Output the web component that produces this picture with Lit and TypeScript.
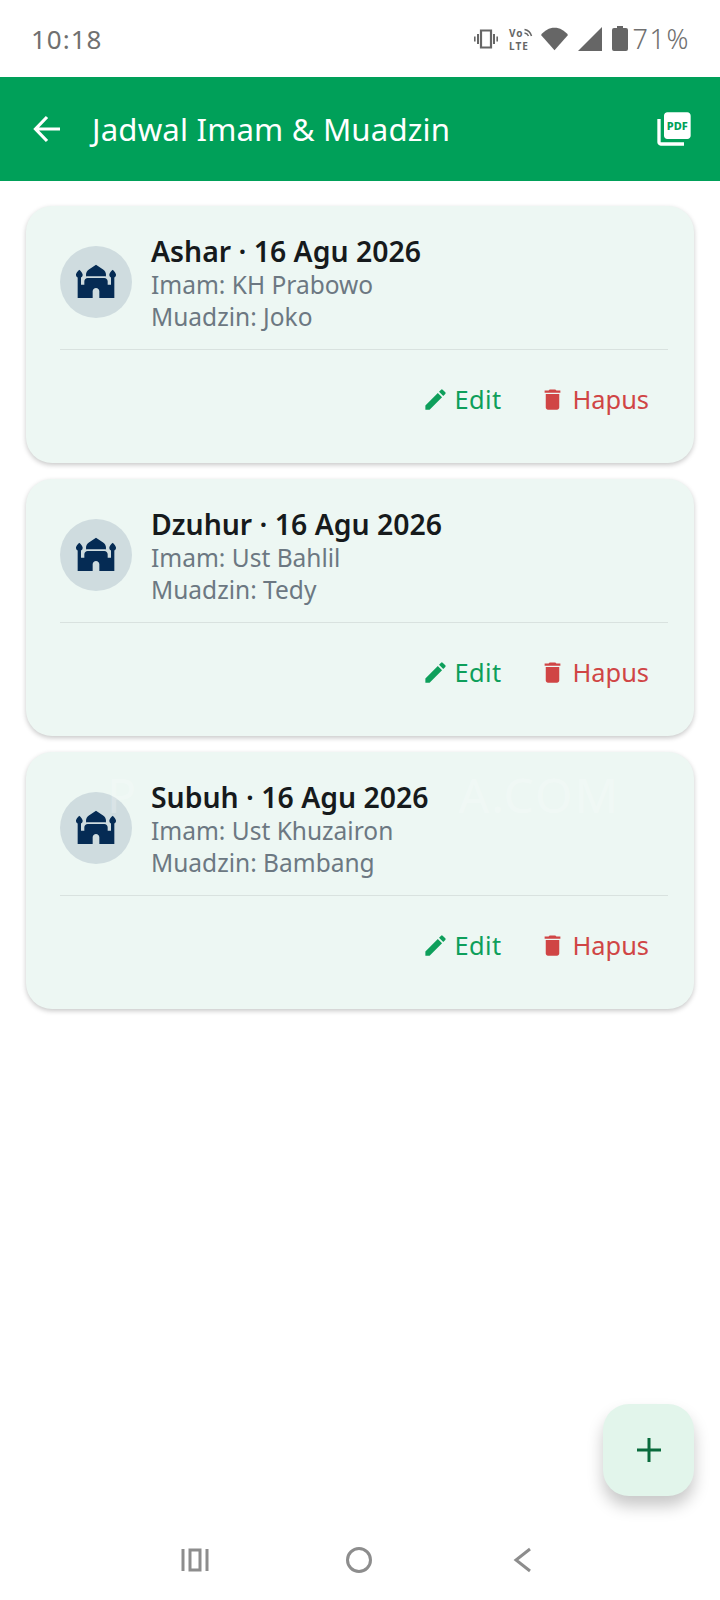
import { LitElement, html, css, svg } from "lit";
import { customElement } from "lit/decorators.js";

const mosque = svg`<path d="M7 8h10c.29 0 .57.06.84.13.09-.33.16-.67.16-1.04 0-1.31-.65-2.53-1.74-3.25L12 1 7.74 3.84C6.65 4.56 6 5.78 6 7.09c0 .37.07.71.16 1.04C6.43 8.06 6.71 8 7 8z"/><path d="M24 7c0-1.1-2-3-2-3s-2 1.9-2 3c0 .74.4 1.38 1 1.72V13h-2v-2c0-1.1-.9-2-2-2H7c-1.1 0-2 .9-2 2v2H3V8.72C3.6 8.38 4 7.74 4 7c0-1.1-2-3-2-3S0 5.9 0 7c0 .74.4 1.38 1 1.72V21h9v-4c0-1.1.9-2 2-2s2 .9 2 2v4h9V8.72c.6-.34 1-.98 1-1.72z"/>`;

const rows = [
  { t: "Ashar · 16 Agu 2026", i: "Imam: KH Prabowo", m: "Muadzin: Joko" },
  { t: "Dzuhur · 16 Agu 2026", i: "Imam: Ust Bahlil", m: "Muadzin: Tedy" },
  { t: "Subuh · 16 Agu 2026", i: "Imam: Ust Khuzairon", m: "Muadzin: Bambang" },
];

@customElement("app-root")
export class AppRoot extends LitElement {
  static styles = css`
    :host { display: block; width: 720px; height: 1600px; background: #fff; font-family: "Noto Sans", sans-serif; position: relative; overflow: hidden; }
    .page { display: flex; flex-direction: column; height: 1600px; }
    .status { height: 77px; flex: none; display: flex; align-items: center; justify-content: space-between; padding: 0 30px 0 31px; color: #707070; font-size: 26px; letter-spacing: 1px; box-sizing: border-box; }
    .status-icons { display: flex; align-items: center; gap: 10px; }
    .status svg { display: block; fill: #666; }
    .status svg.lte { margin-right: -3px; }
    .batt { display: flex; align-items: center; gap: 4px; font-size: 27px; font-weight: 300; letter-spacing: 1.6px; white-space: nowrap; }
    .bar { height: 104px; flex: none; background: #00a059; color: #fff; display: flex; align-items: center; padding: 0 26px 0 33px; box-sizing: border-box; }
    .bar .title { flex: 1; margin-left: 31px; font-size: 31.2px; letter-spacing: 0.15px; }
    .bar svg { display: block; fill: #fff; }
    .back { fill: none !important; stroke: #fff; stroke-width: 3.2; }
    .list { flex: 1; display: flex; flex-direction: column; gap: 16px; padding: 25px 26px 0; position: relative; }
    .card { background: #edf7f3; border-radius: 26px; height: 257px; box-sizing: border-box; padding: 26px 26px 0 34px; box-shadow: 0 2px 5px rgba(0,0,0,.22); display: flex; flex-direction: column; }
    .top { display: flex; align-items: center; gap: 19px; height: 117.5px; border-bottom: 1px solid #d9e2df; box-sizing: border-box; padding-bottom: 17.5px; flex: none; }
    .avatar { width: 72px; height: 72px; border-radius: 50%; background: #cfdcdf; display: flex; align-items: center; justify-content: center; flex: none; padding-bottom: 2px; box-sizing: border-box; }
    .avatar svg { width: 40px; height: 35px; fill: #052b54; display: block; }
    .text { display: flex; flex-direction: column; padding-top: 3px; }
    .name { font-size: 28.4px; font-weight: 600; color: #161a1c; line-height: 36px; white-space: nowrap; }
    .sub { font-size: 24.5px; color: #6c7882; line-height: 32px; white-space: nowrap; }
    .actions { display: flex; justify-content: flex-end; align-items: center; flex: 1; padding-bottom: 14px; padding-right: 19px; gap: 38px; font-size: 25.4px; }
    .act { display: flex; align-items: center; gap: 6px; }
    .act svg { width: 27px; height: 27px; display: block; fill: currentColor; }
    .edit { color: #0e9f5b; letter-spacing: 0.4px; gap: 5px; }
    .del { color: #d04545; }
    .wm { position: absolute; left: 107px; top: 590px; width: 513px; display: flex; justify-content: space-between; font-size: 48px; line-height: 48px; letter-spacing: 2px; color: rgba(255,255,255,.24); pointer-events: none; white-space: nowrap; }
    .fab { position: absolute; left: 603px; top: 1404px; width: 91px; height: 92px; border-radius: 26px; background: #e2f5eb; display: flex; align-items: center; justify-content: center; box-shadow: 0 10px 16px rgba(0,0,0,.22); }
    .fab svg { width: 24px; height: 24px; display: block; stroke: #0a6b3d; stroke-width: 3; fill: none; }
    .nav { height: 82px; flex: none; display: flex; align-items: flex-start; justify-content: center; }
    .nav-in { display: flex; align-items: center; gap: 136px; height: 84px; margin-left: -2px; }
    .nav svg { display: block; fill: none; stroke: #8d8d8d; stroke-width: 3; }
  `;

  render() {
    return html`<div class="page">
      <div class="status">
        <span>10:18</span>
        <div class="status-icons">
          <svg width="24" height="20" viewBox="0 0 24 20"><path d="M7 1.5h10v17H7z" fill="none" stroke="#666" stroke-width="2.2"/><path d="M3 5h2v10H3zM0 7.5h1.6v5H0zM19 5h2v10h-2zM22.4 7.5H24v5h-1.6z"/></svg>
          <svg class="lte" width="26" height="24" viewBox="0 0 26 24"><text x="1" y="10" font-size="10" font-weight="700" font-family="Noto Sans" fill="#666">Vo</text><text x="1" y="22.5" font-size="10" font-weight="700" font-family="Noto Sans" fill="#666">LTE</text><path d="M16.5 6a5 5 0 0 1 4 3M16.5 2.5a9 9 0 0 1 7 6.5" fill="none" stroke="#666" stroke-width="1.5"/></svg>
          <svg width="27" height="24" viewBox="0 0 30 25"><path d="M15 25 0 8C4 3 9 0 15 0s11 3 15 8z"/></svg>
          <svg width="24" height="24" viewBox="0 0 24 24"><path d="M24 0v24H0z"/></svg>
          <span class="batt">
            <svg width="16" height="25" viewBox="0 0 16 25"><path d="M5 0h6v2h3a2 2 0 0 1 2 2v19a2 2 0 0 1-2 2H2a2 2 0 0 1-2-2V4a2 2 0 0 1 2-2h3z"/></svg>
            <span>71%</span>
          </span>
        </div>
      </div>
      <div class="bar">
        <svg class="back" width="28" height="28" viewBox="0 0 28 28"><path d="M27 14H3M14 2 2.5 14 14 26"/></svg>
        <div class="title">Jadwal Imam &amp; Muadzin</div>
        <svg width="40" height="40" viewBox="0 0 24 24"><path d="M20 2H8c-1.1 0-2 .9-2 2v12c0 1.1.9 2 2 2h12c1.1 0 2-.9 2-2V4c0-1.1-.9-2-2-2zM4 6H2v14c0 1.1.9 2 2 2h14v-2H4V6z"/><text x="14" y="12.6" text-anchor="middle" font-size="6.6" font-weight="800" font-family="Noto Sans" fill="#00a059">PDF</text></svg>
      </div>
      <div class="list">
        ${rows.map(r => html`<div class="card">
          <div class="top">
            <div class="avatar"><svg viewBox="0 0 24 21">${mosque}</svg></div>
            <div class="text">
              <div class="name">${r.t}</div>
              <div class="sub">${r.i}</div>
              <div class="sub">${r.m}</div>
            </div>
          </div>
          <div class="actions">
            <div class="act edit"><svg viewBox="0 0 24 24"><path d="M3 17.25V21h3.75L17.81 9.94l-3.75-3.75L3 17.25zM20.71 7.04a1 1 0 0 0 0-1.41l-2.34-2.34a1 1 0 0 0-1.41 0l-1.83 1.83 3.75 3.75 1.83-1.83z"/></svg>Edit</div>
            <div class="act del"><svg viewBox="0 0 24 24"><path d="M6 19c0 1.1.9 2 2 2h8c1.1 0 2-.9 2-2V7H6v12zM19 4h-3.5l-1-1h-5l-1 1H5v2h14V4z"/></svg>Hapus</div>
          </div>
        </div>`)}
        <div class="wm"><span>P</span><span>A.COM</span></div>
      </div>
      <div class="nav">
        <div class="nav-in">
          <svg width="28" height="24" viewBox="0 0 28 24"><path d="M2 1v22M26 1v22M9 2h10v20H9z"/></svg>
          <svg width="28" height="28" viewBox="0 0 28 28"><circle cx="14" cy="14" r="11.5"/></svg>
          <svg width="28" height="26" viewBox="0 0 28 26"><path d="M21 2 7 13l14 11"/></svg>
        </div>
      </div>
    </div>
    <div class="fab"><svg viewBox="0 0 24 24"><path d="M12 0v24M0 12h24"/></svg></div>`;
  }
}
